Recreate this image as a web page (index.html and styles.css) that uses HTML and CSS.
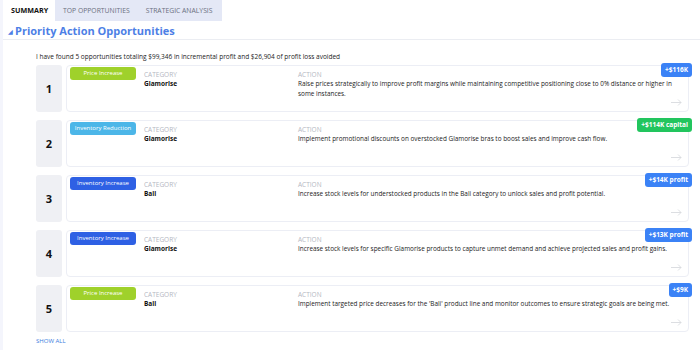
FILE: index.html
```html
<!DOCTYPE html>
<html lang="en">
<head>
<meta charset="UTF-8">
<meta name="viewport" content="width=device-width, initial-scale=1.0">
<title>Priority Action Opportunities</title>
<link rel="stylesheet" href="styles.css">
</head>
<body>
<div class="app">
  <div class="tabs">
    <div class="tab active">SUMMARY</div>
    <div class="tab-group">
      <div class="tab">TOP OPPORTUNITIES</div>
      <div class="tab">STRATEGIC ANALYSIS</div>
    </div>
  </div>
  <h2 class="section-title"><span class="caret">&#9698;</span>Priority Action Opportunities</h2>
  <div class="content">
    <p class="summary">I have found 5 opportunities totaling $99,346 in incremental profit and $26,904 of profit loss avoided</p>
    <div class="list">
      <div class="row">
        <div class="rank">1</div>
        <div class="card">
          <div class="badge-col"><span class="badge price">Price Increase</span></div>
          <div class="category">
            <div class="label">CATEGORY</div>
            <div class="value">Glamorise</div>
          </div>
          <div class="action">
            <div class="label">ACTION</div>
            <div class="text">Raise prices strategically to improve profit margins while maintaining competitive positioning close to 0% distance or higher in some instances.</div>
          </div>
          <span class="tag blue">+$116K</span>
          <svg class="arrow" width="11" height="7" viewBox="0 0 11 7"><path d="M0 3.5H10M7 0.5L10 3.5L7 6.5" fill="none" stroke="#d3d5db" stroke-width="0.8"/></svg>
        </div>
      </div>
      <div class="row">
        <div class="rank">2</div>
        <div class="card">
          <div class="badge-col"><span class="badge reduction">Inventory Reduction</span></div>
          <div class="category">
            <div class="label">CATEGORY</div>
            <div class="value">Glamorise</div>
          </div>
          <div class="action">
            <div class="label">ACTION</div>
            <div class="text">Implement promotional discounts on overstocked Glamorise bras to boost sales and improve cash flow.</div>
          </div>
          <span class="tag green">+$114K capital</span>
          <svg class="arrow" width="11" height="7" viewBox="0 0 11 7"><path d="M0 3.5H10M7 0.5L10 3.5L7 6.5" fill="none" stroke="#d3d5db" stroke-width="0.8"/></svg>
        </div>
      </div>
      <div class="row">
        <div class="rank">3</div>
        <div class="card">
          <div class="badge-col"><span class="badge increase">Inventory Increase</span></div>
          <div class="category">
            <div class="label">CATEGORY</div>
            <div class="value">Bali</div>
          </div>
          <div class="action">
            <div class="label">ACTION</div>
            <div class="text">Increase stock levels for understocked products in the Bali category to unlock sales and profit potential.</div>
          </div>
          <span class="tag blue">+$14K profit</span>
          <svg class="arrow" width="11" height="7" viewBox="0 0 11 7"><path d="M0 3.5H10M7 0.5L10 3.5L7 6.5" fill="none" stroke="#d3d5db" stroke-width="0.8"/></svg>
        </div>
      </div>
      <div class="row">
        <div class="rank">4</div>
        <div class="card">
          <div class="badge-col"><span class="badge increase">Inventory Increase</span></div>
          <div class="category">
            <div class="label">CATEGORY</div>
            <div class="value">Glamorise</div>
          </div>
          <div class="action">
            <div class="label">ACTION</div>
            <div class="text">Increase stock levels for specific Glamorise products to capture unmet demand and achieve projected sales and profit gains.</div>
          </div>
          <span class="tag blue">+$13K profit</span>
          <svg class="arrow" width="11" height="7" viewBox="0 0 11 7"><path d="M0 3.5H10M7 0.5L10 3.5L7 6.5" fill="none" stroke="#d3d5db" stroke-width="0.8"/></svg>
        </div>
      </div>
      <div class="row">
        <div class="rank">5</div>
        <div class="card">
          <div class="badge-col"><span class="badge price">Price Increase</span></div>
          <div class="category">
            <div class="label">CATEGORY</div>
            <div class="value">Bali</div>
          </div>
          <div class="action">
            <div class="label">ACTION</div>
            <div class="text">Implement targeted price decreases for the 'Bali' product line and monitor outcomes to ensure strategic goals are being met.</div>
          </div>
          <span class="tag blue">+$9K</span>
          <svg class="arrow" width="11" height="7" viewBox="0 0 11 7"><path d="M0 3.5H10M7 0.5L10 3.5L7 6.5" fill="none" stroke="#d3d5db" stroke-width="0.8"/></svg>
        </div>
      </div>
    </div>
    <a href="#" class="show-all">SHOW ALL</a>
  </div>
</div>
</body>
</html>
```
FILE: styles.css
```css
body {
  margin: 0;
  padding: 0;
  background-color: #f4f5fc;
  font-family: "Open Sans", "Noto Sans", sans-serif;
  color: #222;
}

.app {
  margin-left: 3px;
  background-color: #fff;
  height: 350px;
  overflow: hidden;
}

.tabs {
  display: flex;
  height: 21px;
}

.tab {
  font-size: 6.8px;
  color: #6b7080;
  padding: 0 8px;
  line-height: 21px;
  white-space: nowrap;
}

.tab.active {
  width: 36px;
  font-size: 7.2px;
  color: #111;
  font-weight: 700;
  background-color: #fff;
}

.tab-group {
  display: flex;
  background-color: #e4e8f6;
  padding-right: 1px;
}

.section-title {
  margin: 0;
  height: 18px;
  line-height: 20px;
  padding-left: 5px;
  font-size: 11px;
  font-weight: 700;
  color: #4d7fe6;
  border-bottom: 1px solid #ebedf2;
}

.caret {
  font-size: 6px;
  margin-right: 2px;
  vertical-align: 1px;
}

.content {
  padding: 0 11px 0 33px;
}

.summary {
  margin: 0;
  padding: 12px 0 3px 0;
  font-size: 6.5px;
  line-height: 10px;
  color: #222;
}

.list {
  display: flex;
  flex-direction: column;
  gap: 8px;
}

.row {
  display: flex;
  gap: 4px;
  height: 47px;
}

.rank {
  width: 26px;
  background-color: #eff0f4;
  border-radius: 3px;
  display: flex;
  align-items: center;
  justify-content: center;
  font-size: 11px;
  font-weight: 700;
  color: #111;
}

.card {
  position: relative;
  flex: 1;
  display: flex;
  border: 1px solid #eceef5;
  border-radius: 4px;
  padding: 1px 3px;
}

.badge-col {
  width: 66px;
  margin-right: 8px;
}

.badge {
  display: block;
  height: 13px;
  line-height: 13px;
  border-radius: 3px;
  text-align: center;
  font-size: 6px;
  color: #fff;
}

.badge.price {
  background-color: #9fd12b;
}

.badge.reduction {
  background-color: #4cb6e8;
}

.badge.increase {
  background-color: #2e60e4;
}

.category {
  width: 154px;
  padding-top: 3px;
}

.action {
  width: 384px;
  padding-top: 3px;
}

.label {
  font-size: 6.5px;
  line-height: 9px;
  color: #b4b7bf;
}

.value {
  font-size: 6.5px;
  font-weight: 700;
  line-height: 10px;
  color: #111;
}

.text {
  font-size: 6.4px;
  line-height: 10px;
  color: #222;
}

.tag {
  position: absolute;
  top: -3px;
  right: -4px;
  height: 14px;
  line-height: 14px;
  padding: 0 4px;
  border-radius: 3px;
  font-size: 6.5px;
  font-weight: 700;
  color: #fff;
}

.tag.blue {
  background-color: #3b82f6;
}

.tag.green {
  background-color: #22c55e;
}

.arrow {
  position: absolute;
  right: 6px;
  bottom: 5px;
}

.show-all {
  display: block;
  margin-top: 5px;
  line-height: 8px;
  font-size: 6px;
  color: #3b7de0;
  text-decoration: none;
}
```
